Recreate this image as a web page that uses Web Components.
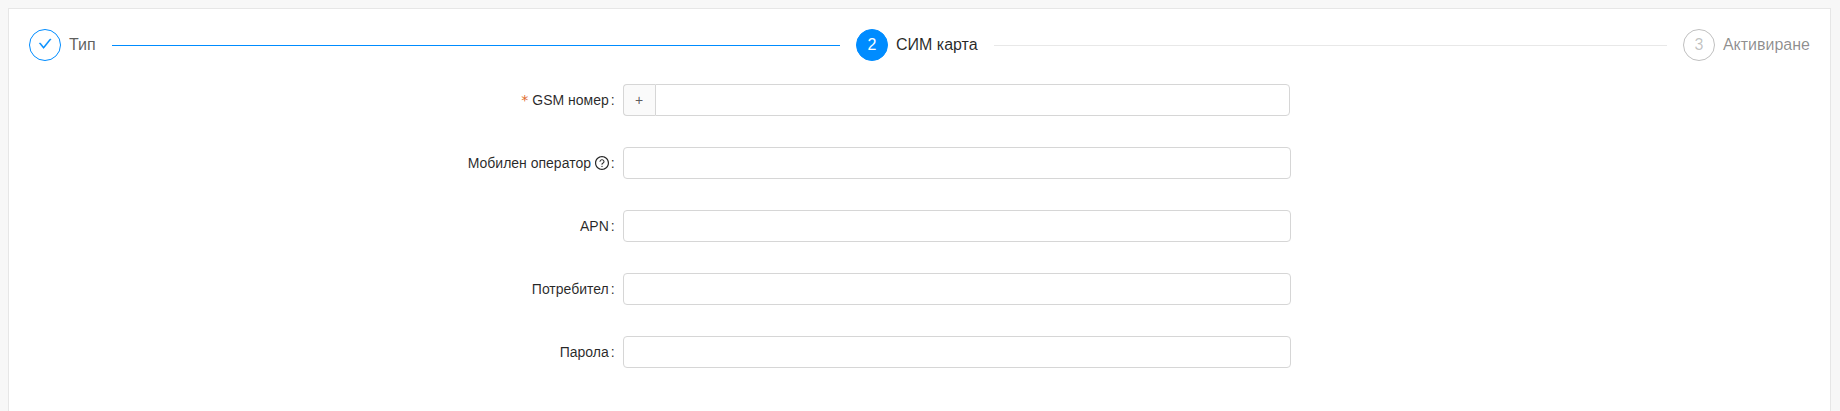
<!DOCTYPE html>
<html lang="bg">
<head>
<meta charset="utf-8">
<title>СИМ карта</title>
<style>
html,body{margin:0;height:100%}
body{background:#f7f7f7;font:14px/1.5 "Liberation Sans",Arial,sans-serif;color:rgba(0,0,0,.85);overflow:hidden}
</style>
</head>
<body>
<wizard-card>
  <step-bar>
    <step-item state="finish" number="1">Тип</step-item>
    <step-item state="process" number="2">СИМ карта</step-item>
    <step-item state="wait" number="3">Активиране</step-item>
  </step-bar>
  <form-row label="GSM номер" required prefix="+"></form-row>
  <form-row label="Мобилен оператор" hint></form-row>
  <form-row label="APN"></form-row>
  <form-row label="Потребител"></form-row>
  <form-row label="Парола"></form-row>
</wizard-card>
<script>
class Base extends HTMLElement {
  connectedCallback() {
    if (!this.shadowRoot) this.attachShadow({ mode: "open" }).innerHTML = this.render();
  }
}
customElements.define("wizard-card", class extends Base {
  render() {
    return `<style>
      :host{display:block;box-sizing:border-box;margin:0 9px 0 8px;border:1px solid #e6e6e6;border-bottom:0;background:#fff;padding:20px;height:403px;position:relative;top:8px}
    </style><slot></slot>`;
  }
});
customElements.define("step-bar", class extends Base {
  render() {
    return `<style>
      :host{display:flex;gap:16px;margin-bottom:23px}
      ::slotted(step-item){flex:1}
      ::slotted(step-item:last-child){flex:none}
    </style><slot></slot>`;
  }
});
customElements.define("step-item", class extends Base {
  render() {
    const check = `<svg viewBox="-46 54 1092 1092" width="16" height="16" fill="currentColor" stroke="currentColor" stroke-width="25"><path d="M912 190h-69.9c-9.8 0-19.1 4.5-25.1 12.2L404.7 724.5 207 474a32 32 0 0 0-25.1-12.2H112c-6.7 0-10.4 7.7-6.3 12.9l273.9 347c12.8 16.2 37.4 16.2 50.3 0l488.4-618.9c4.1-5.1.4-12.8-6.3-12.8z"/></svg>`;
    const mark = this.getAttribute("state") === "finish" ? check : this.getAttribute("number");
    return `<style>
      :host{display:flex;align-items:center;height:32px;font-size:16px;line-height:32px;white-space:nowrap}
      .icon{box-sizing:border-box;flex:none;width:32px;height:32px;border:1px solid #008cff;border-radius:50%;margin-right:8px;display:flex;align-items:center;justify-content:center;line-height:30px}
      svg{display:block}
      .line{flex:1;height:1px;margin:1px 0 0 16px;background:#e8e8e8}
      :host([state=finish]) .icon{color:#008cff}
      :host([state=finish]) .title{color:rgba(0,0,0,.65)}
      :host([state=finish]) .line{background:#008cff}
      :host([state=process]) .icon{background:#008cff;color:#fff}
      :host([state=wait]) .icon{border-color:rgba(0,0,0,.25);color:rgba(0,0,0,.25)}
      :host([state=wait]) .title{color:rgba(0,0,0,.45)}
      :host(:last-child) .line{display:none}
    </style><span class="icon">${mark}</span><span class="title"><slot></slot></span><span class="line"></span>`;
  }
});
customElements.define("form-row", class extends Base {
  render() {
    const star = this.hasAttribute("required") ? `<span class="star">*</span>` : "";
    const hint = this.hasAttribute("hint") ? `<svg viewBox="0 0 1024 1024" width="16" height="16" fill="currentColor"><path d="M512 64C264.6 64 64 264.6 64 512s200.6 448 448 448 448-200.6 448-448S759.4 64 512 64zm0 820c-205.4 0-372-166.6-372-372s166.6-372 372-372 372 166.6 372 372-166.6 372-372 372z"/><path d="M623.6 316.7C593.6 290.4 554 276 512 276s-81.6 14.5-111.6 40.7C369.2 344 352 380.7 352 420v7.6c0 4.4 3.6 8 8 8h48c4.4 0 8-3.6 8-8V420c0-44.1 43.1-80 96-80s96 35.9 96 80c0 31.1-22 59.6-56.1 72.7-21.2 8.1-39.2 22.3-52.1 40.9-13.1 19-19.9 41.8-19.9 64.9V620c0 4.4 3.6 8 8 8h48c4.4 0 8-3.6 8-8v-22.7a48.3 48.3 0 0 1 30.9-44.8c59-22.7 97.1-74.7 97.1-132.5.1-39.3-17.1-76-48.3-103.3zM472 732a40 40 0 1 0 80 0 40 40 0 1 0-80 0z"/></svg>` : "";
    const prefix = this.getAttribute("prefix");
    return `<style>
      :host{display:flex;height:32px;margin-bottom:31px}
      .label{box-sizing:border-box;width:33.3333%;padding-right:8px;display:flex;justify-content:flex-end;align-items:center;line-height:32px;white-space:nowrap}
      .star{color:#e06a2b;margin-right:4px;font-family:"DejaVu Sans",sans-serif}
      .colon{margin-left:2px}
      svg{margin:0 -1.2px 0 3px}
      .control{width:37.5%;display:flex}
      :host([prefix]) .control{width:calc(37.5% - .9px)}
      .addon{box-sizing:border-box;flex:none;width:32px;border:1px solid #d6d6d6;border-right:0;border-radius:4px 0 0 4px;background:#fafafa;color:rgba(0,0,0,.65);text-align:center;line-height:30px}
      input{box-sizing:border-box;flex:1;min-width:0;height:32px;margin:0;padding:4px 11px;border:1px solid #d6d6d6;border-radius:4px;background:#fff;font:inherit;outline:0}
      .addon + input{border-radius:0 4px 4px 0}
    </style><div class="label">${star}<span>${this.getAttribute("label")}</span>${hint}<span class="colon">:</span></div>
    <div class="control">${prefix ? `<span class="addon">${prefix}</span>` : ""}<input type="text" aria-label="${this.getAttribute("label")}"></div>`;
  }
});
</script>
</body>
</html>
